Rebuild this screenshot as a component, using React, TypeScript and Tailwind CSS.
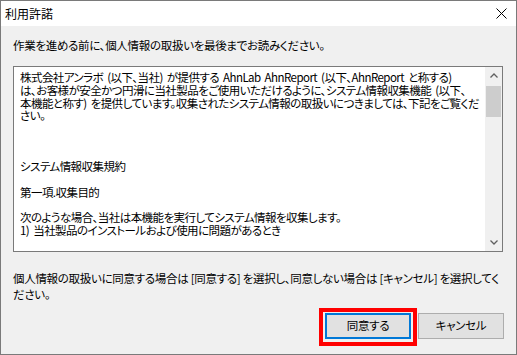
import React from "react";

const lines: string[] = [
  "株式会社アンラボ (以下、当社) が提供する AhnLab AhnReport (以下、AhnReport と称する)",
  "は、お客様が安全かつ円滑に当社製品をご使用いただけるように、システム情報収集機能 (以下、",
  "本機能と称す) を提供しています。収集されたシステム情報の取扱いにつきましては、下記をご覧くだ",
  "さい。",
  "",
  "",
  "",
  "システム情報収集規約",
  "",
  "第一項.収集目的",
  "",
  "次のような場合、当社は本機能を実行してシステム情報を収集します。",
  "1) 当社製品のインストールおよび使用に問題があるとき",
];

const Chevron = ({ down }: { down?: boolean }) => (
  <svg width="8" height="5" viewBox="0 0 8 5">
    <path
      d={down ? "M0.5 0.5 L4 4 L7.5 0.5" : "M0.5 4.5 L4 1 L7.5 4.5"}
      fill="none"
      stroke="#606060"
      strokeWidth="1.3"
    />
  </svg>
);

const ScrollBar = () => (
  <div className="w-[17px] bg-[#f0f0f0] flex flex-col">
    <div className="h-[17px] flex items-center justify-center">
      <Chevron />
    </div>
    <div className="mt-[2px] mx-[1px] h-[31px] bg-[#cdcdcd]" />
    <div className="flex-1" />
    <div className="h-[17px] flex items-center justify-center">
      <Chevron down />
    </div>
  </div>
);

export default function App() {
  return (
    <div
      className="w-[517px] h-[355px] border border-[#7a7a7a] bg-[#f0f0f0] flex flex-col text-[11.5px] tracking-[-0.3px] text-black [font-feature-settings:'palt']"
      style={{ fontFamily: '"Noto Sans CJK JP", sans-serif' }}
    >
      {/* title bar */}
      <div className="h-[25px] bg-white flex items-center justify-between pl-[4px] pr-[9px]">
        <span className="leading-[25px] text-[12px] tracking-normal">利用許諾</span>
        <svg width="11" height="11" viewBox="0 0 11 11">
          <path d="M0.5 0.5 L10.5 10.5 M10.5 0.5 L0.5 10.5" stroke="#000" strokeWidth="1" />
        </svg>
      </div>

      <div className="flex-1 pl-[12px] pr-[13px]">
        <div className="mt-[12px] leading-[15px] whitespace-nowrap">
          作業を進める前に、個人情報の取扱いを最後までお読みください。
        </div>

        {/* license text box */}
        <div className="mt-[13px] h-[186px] border border-[#7a7a7a] bg-white flex">
          <div className="flex-1 overflow-hidden pl-[6px] pt-[4px] leading-[12.75px] whitespace-nowrap tracking-[-0.55px] [word-spacing:2px]">
            {lines.map((l, i) => (
              <div key={i} className="h-[12.75px]">
                {l}
              </div>
            ))}
          </div>
          <ScrollBar />
        </div>

        <div className="mt-[18px] leading-[16px] whitespace-nowrap">
          個人情報の取扱いに同意する場合は [同意する] を選択し、同意しない場合は [キャンセル] を選択してく
          <br />
          ださい。
        </div>

        <div className="mt-[11px] flex justify-end gap-[7px] mr-[-1px]">
          <div className="relative">
            <button className="w-[86px] h-[26px] border-2 border-[#0078d7] bg-[#e1e1e1] flex items-center justify-center">
              同意する
            </button>
            <div className="absolute left-[-6px] right-[-6px] top-[-5px] bottom-[-7px] border-4 border-[#ff0000] pointer-events-none" />
          </div>
          <button className="w-[86px] h-[26px] border border-[#adadad] bg-[#e1e1e1] flex items-center justify-center">
            キャンセル
          </button>
        </div>
      </div>
    </div>
  );
}
